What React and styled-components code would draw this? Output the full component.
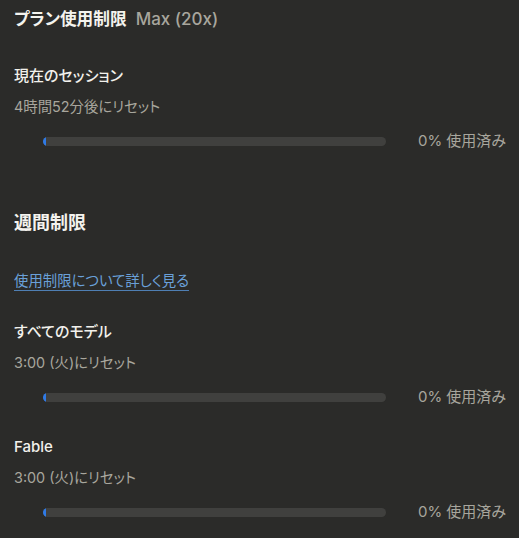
import React from "react";
import styled, { createGlobalStyle } from "styled-components";

const Global = createGlobalStyle`
  html, body { margin: 0; padding: 0; background: #2b2b29; }
  body {
    font-family: Inter, "Noto Sans CJK JP", sans-serif;
    font-feature-settings: "palt";
    -webkit-font-smoothing: antialiased;
  }
`;

const Page = styled.div`
  padding: 7px 13px 0 14px;
  display: flex;
  flex-direction: column;
  color: #f2f1ec;
`;

const TitleRow = styled.div`
  display: flex;
  align-items: baseline;
  gap: 9px;
  line-height: 24px;
`;

const Title = styled.h1`
  margin: 0;
  font-size: 16.7px;
  font-weight: 700;
  color: #f4f3ee;
`;

const Plan = styled.span`
  font-size: 17px;
  font-weight: 500;
  color: #a8a69d;
`;

const SectionTitle = styled.h2`
  margin: ${(p) => p.$mt}px 0 0;
  font-size: 18px;
  font-weight: 700;
  line-height: 26px;
  color: #f4f3ee;
`;

const Item = styled.div`
  display: flex;
  flex-direction: column;
  margin-top: ${(p) => p.$mt}px;
`;

const ItemName = styled.div`
  font-size: 15px;
  font-weight: 500;
  line-height: 22px;
  color: #f2f1ec;
`;

const Reset = styled.div`
  margin-top: 10px;
  font-size: 14.4px;
  line-height: 20px;
  color: #a8a69d;
`;

const BarRow = styled.div`
  margin-top: 14px;
  padding-left: 29px;
  display: flex;
  align-items: center;
  gap: 32px;
`;

const Track = styled.div`
  flex: 1;
  height: 9px;
  border-radius: 5px;
  background: #40403e;
  overflow: hidden;
`;

const Fill = styled.div`
  height: 100%;
  min-width: 3px;
  background: #2f7ae5;
  border-radius: 5px 0 0 5px;
`;

const Used = styled.span`
  font-size: 15px;
  line-height: 20px;
  color: #a8a69d;
  white-space: nowrap;
`;

const Link = styled.a`
  margin-top: 35px;
  align-self: flex-start;
  font-size: 14.4px;
  line-height: 19px;
  color: #6aa0d8;
  text-decoration: none;
  border-bottom: 1px solid #4f7fb3;
`;

function Usage({ name, reset, pct, mt }) {
  return (
    <Item $mt={mt}>
      <ItemName>{name}</ItemName>
      <Reset>{reset}</Reset>
      <BarRow>
        <Track>
          <Fill style={{ width: `${pct}%` }} />
        </Track>
        <Used>{pct}% 使用済み</Used>
      </BarRow>
    </Item>
  );
}

export default function App() {
  return (
    <>
      <Global />
      <Page>
        <TitleRow>
          <Title>プラン使用制限</Title>
          <Plan>Max (20x)</Plan>
        </TitleRow>
        <Usage mt={34} name="現在のセッション" reset="4時間52分後にリセット" pct={0} />
        <SectionTitle $mt={59}>週間制限</SectionTitle>
        <Link href="#">使用制限について詳しく見る</Link>
        <Usage mt={30} name="すべてのモデル" reset="3:00 (火)にリセット" pct={0} />
        <Usage mt={29} name="Fable" reset="3:00 (火)にリセット" pct={0} />
      </Page>
    </>
  );
}
